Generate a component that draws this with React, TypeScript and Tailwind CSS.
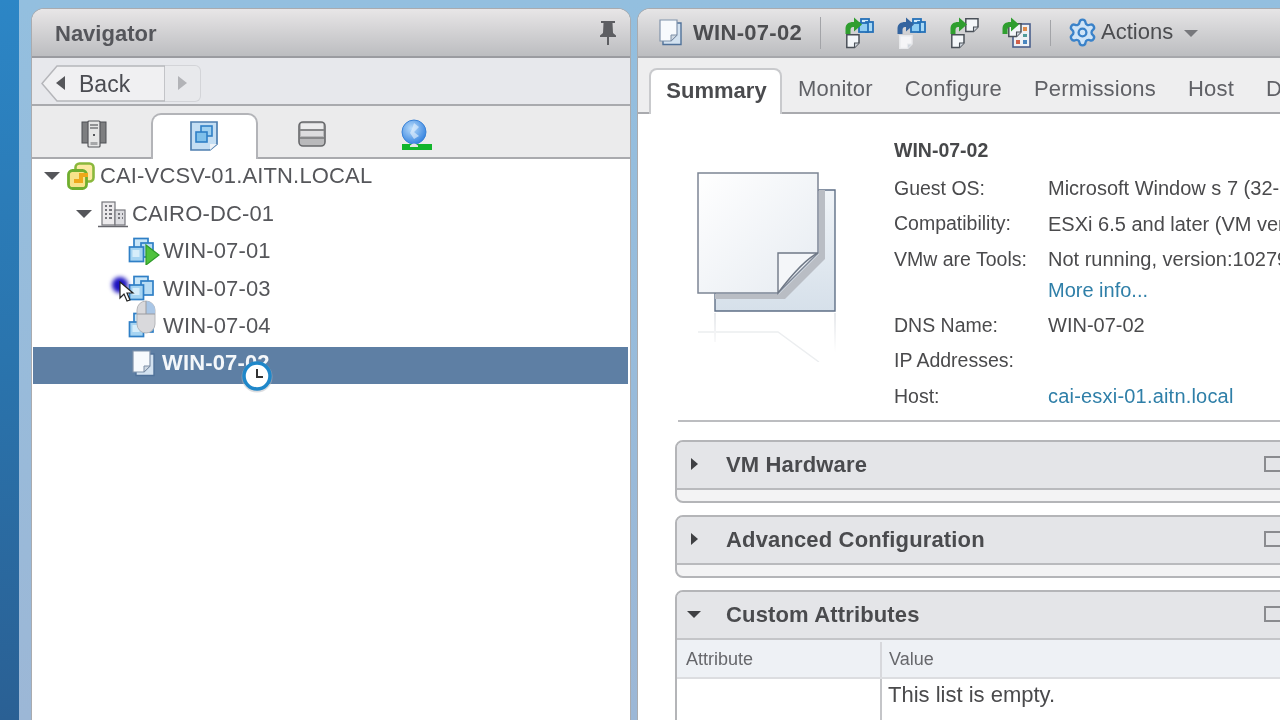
import { Settings } from "lucide-react";
import React from "react";

function VmGroupIcon({ running = false }: { running?: boolean }) {
  return (
    <svg width="32" height="28" viewBox="0 0 32 28" className="shrink-0">
      <rect x="6" y="1.5" width="14" height="13" fill="#c9e6f8" stroke="#2f7fc6" strokeWidth="1.7" />
      <rect x="13" y="6" width="12" height="14" fill="#b7dcf4" stroke="#2f7fc6" strokeWidth="1.7" />
      <rect x="1.5" y="10" width="14" height="14.5" fill="#a6d4f2" stroke="#2f7fc6" strokeWidth="1.7" />
      <rect x="4.5" y="13" width="7" height="7" fill="#d6edfa" />
      {running && <path d="M18 8 L31 18 L18 28 Z" fill="#4fc23d" stroke="#2f9a2a" strokeWidth="1.2" />}
    </svg>
  );
}

function DocIcon() {
  return (
    <svg width="24" height="27" viewBox="0 0 24 27" className="shrink-0">
      <path d="M5 4 H23 V25.5 H5 Z" fill="#d3e2f0" stroke="#4f7199" strokeWidth="1.4" />
      <path d="M2 1 H19 V16 L13 22 H2 Z" fill="#f7fafd" stroke="#8093ab" strokeWidth="1.2" />
      <path d="M13 22 V16 H19 Z" fill="#cfd8e2" stroke="#7d8fa6" strokeWidth="1" />
    </svg>
  );
}

function VcenterIcon() {
  return (
    <svg width="28" height="28" viewBox="0 0 28 28" className="shrink-0">
      <rect x="8.5" y="1.5" width="18" height="18" rx="4" fill="#fbe9a0" stroke="#8ab83c" strokeWidth="2.6" />
      <rect x="1.5" y="8.5" width="18" height="18" rx="4" fill="#f8e38a" stroke="#6fae2f" strokeWidth="2.8" />
      <path d="M7 17 h5 v-6 h9 v4 h-5 v6 h-9 Z" fill="#eea81a" />
    </svg>
  );
}

function DatacenterIcon() {
  return (
    <svg width="30" height="28" viewBox="0 0 30 28" className="shrink-0">
      <rect x="4" y="2" width="13" height="23" fill="#eceaec" stroke="#77777d" strokeWidth="1.2" />
      <rect x="17" y="10" width="10" height="15" fill="#dcdce0" stroke="#77777d" strokeWidth="1.2" />
      <path d="M7 6h2M11 6h3M7 10h2M11 10h3M7 14h2M11 14h3M7 18h2M11 18h3M20 14h2M24 14h1M20 18h2M24 18h1" stroke="#77777d" strokeWidth="2" />
      <path d="M0 26.5 H30" stroke="#66666c" strokeWidth="1.6" />
    </svg>
  );
}

function ArrowGlyph({ color = "#2f9e2f" }: { color?: string }) {
  return <path d="M0.5 17 V11.5 C0.5 7 4 5 8 5 H9 V0.5 L17 7.5 L9 14.5 V10 H8 C6.5 10 5.5 11 5.5 13 V17 Z" fill={color} />;
}

function SmallDoc({ x, y, faded = false }: { x: number; y: number; faded?: boolean }) {
  return (
    <g transform={`translate(${x} ${y})`}>
      <path
        d="M0.8 0.8 H13 V9 L8.5 13.5 H0.8 Z"
        fill={faded ? "#f5f5f7" : "#f3f6f9"}
        stroke={faded ? "#e8e9ec" : "#4a5058"}
        strokeWidth="1.5"
      />
      <path d="M8.5 13.5 V9 H13" fill="#cfd6dd" stroke={faded ? "#e8e9ec" : "#4a5058"} strokeWidth="1.1" />
    </g>
  );
}

function SmallGroup({ x, y }: { x: number; y: number }) {
  return (
    <g transform={`translate(${x} ${y})`} stroke="#2470b8" strokeWidth="1.8">
      <rect x="3" y="1" width="8" height="8" fill="#d3ecfb" />
      <rect x="8" y="4" width="7" height="10" fill="#a9d9f5" />
      <rect x="1" y="5" width="9" height="9" fill="#8fcdf2" />
    </g>
  );
}

function ToolIcon({ kind }: { kind: 1 | 2 | 3 | 4 }) {
  return (
    <svg width="30" height="32" viewBox="0 0 30 32" className="mt-[1px] shrink-0">
      {kind === 1 && (
        <>
          <SmallGroup x={13} y={1} />
          <ArrowGlyph />
          <SmallDoc x={1} y={17} />
        </>
      )}
      {kind === 2 && (
        <>
          <SmallGroup x={13} y={1} />
          <ArrowGlyph color="#34649f" />
          <SmallDoc x={2} y={18} faded />
        </>
      )}
      {kind === 3 && (
        <>
          <SmallDoc x={15} y={1} />
          <ArrowGlyph />
          <SmallDoc x={1} y={17} />
        </>
      )}
      {kind === 4 && (
        <>
          <rect x="11" y="7" width="17" height="23" fill="#eef1f5" stroke="#4a5f8c" strokeWidth="1.6" />
          <rect x="21" y="10" width="4" height="4" fill="#e08a4a" />
          <rect x="21" y="17" width="4" height="3" fill="#4f9a9a" />
          <rect x="14" y="23" width="4" height="4" fill="#d0604a" />
          <rect x="21" y="23" width="4" height="4" fill="#4a86c0" />
          <SmallDoc x={6} y={6} />
          <ArrowGlyph />
        </>
      )}
    </svg>
  );
}

function BigDoc() {
  return (
    <svg width="140" height="190" viewBox="0 0 140 190" className="shrink-0">
      <defs>
        <linearGradient id="page" x1="0" y1="0" x2="1" y2="1">
          <stop offset="0" stopColor="#ffffff" />
          <stop offset="1" stopColor="#e6ebf1" />
        </linearGradient>
        <linearGradient id="back" x1="0" y1="0" x2="0" y2="1">
          <stop offset="0" stopColor="#f0f4f8" />
          <stop offset="1" stopColor="#d6e0ea" />
        </linearGradient>
        <linearGradient id="fade" x1="0" y1="0" x2="0" y2="1">
          <stop offset="0" stopColor="#e6e8eb" />
          <stop offset="1" stopColor="#ffffff" />
        </linearGradient>
      </defs>
      <path d="M18 18 H138 V139 H18 Z" fill="url(#back)" stroke="#5f6f86" strokeWidth="1.4" />
      <path d="M122 18 H128 V87 L88 127 H18 V122 H82 L122 82 Z" fill="#b9bdc4" />
      <path d="M1 1 H121 V81 L81 121 H1 Z" fill="url(#page)" stroke="#7c8594" strokeWidth="1.5" />
      <path d="M81 121 V81 H121 Q106 88 81 121 Z" fill="#f4f6f9" stroke="#6f7886" strokeWidth="1.4" />
      <path d="M1 160 H81 L122 190" fill="none" stroke="#eceef0" strokeWidth="1.5" />
      <path d="M18 141 V170 M138 141 V180" stroke="url(#fade)" strokeWidth="2" />
    </svg>
  );
}

function ServerIcon() {
  return (
    <svg width="26" height="28" viewBox="0 0 26 28">
      <rect x="1" y="2" width="8" height="21" fill="#7d7e80" stroke="#4f5054" />
      <rect x="17" y="2" width="8" height="21" fill="#7d7e80" stroke="#4f5054" />
      <rect x="7" y="1" width="12" height="26" rx="1" fill="#e6e6e6" stroke="#55565a" strokeWidth="1.2" />
      <path d="M9 5h8M9 8h8" stroke="#77787b" strokeWidth="1.5" />
      <rect x="12" y="14" width="2" height="2" fill="#55565a" />
      <rect x="9.5" y="22" width="7" height="3" fill="#a6a7a9" />
    </svg>
  );
}

function StorageIcon() {
  return (
    <svg width="28" height="26" viewBox="0 0 28 26">
      <rect x="1" y="1" width="26" height="24" rx="4" fill="#b9b9bb" stroke="#67686b" strokeWidth="1.6" />
      <rect x="3" y="2.5" width="22" height="5.5" fill="#ececed" />
      <rect x="3" y="10" width="22" height="5" fill="#dddddf" />
      <path d="M1 9H27M1 17H27" stroke="#77787b" strokeWidth="1.6" />
    </svg>
  );
}

function NetworkIcon() {
  return (
    <svg width="32" height="32" viewBox="0 0 32 32">
      <defs>
        <radialGradient id="globe" cx="0.4" cy="0.35" r="0.7">
          <stop offset="0" stopColor="#b9dcfb" />
          <stop offset="1" stopColor="#2f7fde" />
        </radialGradient>
      </defs>
      <circle cx="13" cy="13" r="12" fill="url(#globe)" stroke="#3a82d6" />
      <path d="M13 4 L18 8 L13 13 L18 17 L13 20 L9 14 L11 10 Z" fill="#eaf4fd" opacity="0.6" />
      <rect x="1" y="25" width="30" height="6" fill="#12b52b" />
      <path d="M9 26.5 Q13 22.5 17 26.5 V28 H9 Z" fill="#e6e6e6" />
    </svg>
  );
}

function PinIcon() {
  return (
    <svg width="18" height="26" viewBox="0 0 18 26">
      <path d="M2 1 H16 V3 H13.5 L14 13 L17 15.5 V17 H10 V25 H8 V17 H1 V15.5 L4 13 L4.5 3 H2 Z" fill="#5d5e62" />
    </svg>
  );
}

function TreeRow({
  indent,
  open,
  icon,
  label,
  selected = false,
}: {
  indent: string;
  open?: boolean;
  icon: React.ReactNode;
  label: string;
  selected?: boolean;
}) {
  return (
    <div className={`h-[37.5px] shrink-0 ${selected ? "mr-[2px] ml-[1px] bg-[#5e7fa4] pb-[4px]" : "pb-[3px]"}`}>
      <div className={`flex h-full items-center ${indent}`}>
        {open && (
          <div className="mr-[7px] h-0 w-0 shrink-0 border-x-[8px] border-t-[8px] border-x-transparent border-t-[#55565a]" />
        )}
        {icon}
        <span
          className={`whitespace-nowrap text-[22px] leading-none tracking-[0.15px] ${
            selected ? "font-bold text-[#f4f7fa]" : "text-[#55565a]"
          }`}
        >
          {label}
        </span>
      </div>
    </div>
  );
}

function InfoRow({ label, value, link = false }: { label: string; value?: string; link?: boolean }) {
  return (
    <div className="flex h-[35.5px] items-center whitespace-nowrap text-[#4a4a4c]">
      <span className="w-[154px] shrink-0 text-[19.5px]">{label}</span>
      {value && <span className={link ? "text-[20px] tracking-[0.2px] text-[#2f7fa8]" : "text-[20px]"}>{value}</span>}
    </div>
  );
}

function Section({ title, open = false }: { title: string; open?: boolean }) {
  return (
    <div className="mr-[-12px] mb-[12px] ml-[37px] shrink-0 overflow-hidden rounded-[8px] border-2 border-[#b4b5b8] bg-[#f3f3f4]">
      <div className="flex h-[46px] items-center bg-[#e4e5e8] pb-[2px]">
        <div className="flex w-[49px] shrink-0 justify-center pr-[15px]">
          {open ? (
            <div className="h-0 w-0 border-x-[7px] border-t-[7px] border-x-transparent border-t-[#3f4043]" />
          ) : (
            <div className="h-0 w-0 border-y-[6px] border-l-[7px] border-y-transparent border-l-[#3f4043]" />
          )}
        </div>
        <span className="whitespace-nowrap text-[22px] font-bold tracking-[0.15px] text-[#4a4b4e]">{title}</span>
        <div className="mr-[-1px] ml-auto h-[16px] w-[27px] shrink-0 border-2 border-[#8a8b8f]" />
      </div>
      {open ? (
        <div className="border-t-2 border-[#c4c5c8] bg-white">
          <div className="flex h-[39px] border-b-2 border-[#dcdde0] bg-[#eef1f5] pt-[2px] text-[18px] text-[#66676b]">
            <div className="flex w-[205px] shrink-0 items-center border-r-2 border-[#d7d8dc] pl-[9px]">Attribute</div>
            <div className="flex items-center pl-[7px]">Value</div>
          </div>
          <div className="flex h-[60px]">
            <div className="w-[205px] shrink-0 border-r-2 border-[#c4c5c8]" />
            <div className="pl-[6px] text-[22px] leading-[31px] text-[#4a4a4c]">This list is empty.</div>
          </div>
        </div>
      ) : (
        <div className="h-[13px] border-t-2 border-[#b9babd]" />
      )}
    </div>
  );
}

export default function App() {
  return (
    <div className="relative flex h-[720px] w-[1280px] overflow-hidden bg-[#9dbfdc] font-['Liberation_Sans',sans-serif] blur-[0.4px]">
      {/* desktop strip on the far left */}
      <div className="h-full w-[19px] shrink-0 bg-gradient-to-b from-[#2c86c6] via-[#2a74ad] to-[#2a6094]" />

      <div className="flex min-w-0 flex-1 gap-[8px] bg-gradient-to-b from-[#93bfdf] to-[#9cb7d6] pt-[9px] pl-[13px]">
        {/* Navigator */}
        <div className="flex h-[720px] w-[598px] shrink-0 flex-col overflow-hidden rounded-t-[12px] bg-white shadow-[0_0_0_1px_#a9abaf]">
          <div className="flex h-[49px] shrink-0 items-center justify-between border-b-2 border-[#9a9ba0] bg-gradient-to-b from-[#e8e6e7] to-[#bcbdc0] pr-[13px] pl-[23px]">
            <span className="pt-[1px] text-[22px] font-bold text-[#55565b]">Navigator</span>
            <PinIcon />
          </div>

          <div className="flex h-[48px] shrink-0 items-center border-b-2 border-[#a9aaae] bg-[#e7e8ec] pt-[4px] pl-[9px]">
            <div className="relative flex h-[37px] w-[124px] items-center">
              <svg width="124" height="37" viewBox="0 0 124 37" className="absolute inset-0">
                <path d="M16 1 H124 V36 H16 L1 18.5 Z" fill="#f0f0f2" stroke="#b5b6ba" strokeWidth="1.5" />
              </svg>
              <div className="relative ml-[15px] h-0 w-0 border-y-[7px] border-r-[9px] border-y-transparent border-r-[#55565a]" />
              <span className="relative mt-[2px] ml-[14px] text-[23px] text-[#4b4c52]">Back</span>
            </div>
            <div className="flex h-[37px] w-[36px] items-center justify-center rounded-r-[6px] border border-l-0 border-[#d3d4d8] bg-[#e8e9ec]">
              <div className="h-0 w-0 border-y-[7px] border-l-[9px] border-y-transparent border-l-[#b2b3b7]" />
            </div>
          </div>

          <div className="flex h-[53px] shrink-0 items-end border-b-2 border-[#a9aaae] bg-[#ebebec] pl-[8px]">
            <div className="mb-[3px] flex h-[40px] w-[107px] shrink-0 items-center justify-center">
              <ServerIcon />
            </div>
            <div className="mb-[-2px] ml-[4px] flex h-[46px] w-[107px] shrink-0 items-center justify-center rounded-t-[10px] border-2 border-b-0 border-[#b3b4b8] bg-white pb-[2px] pr-[2px]">
              <svg width="30" height="32" viewBox="0 0 30 32">
                <path d="M2 2 H28 V24 L21 30 H2 Z" fill="#c4def3" stroke="#4f7fb0" strokeWidth="1.7" />
                <path d="M21 30 V24 H28 Z" fill="#eef3f8" />
                <rect x="12" y="6" width="11" height="10" fill="#9fd0f0" stroke="#2f7fc6" strokeWidth="1.6" />
                <rect x="7" y="12" width="11" height="10" fill="#7fc0ea" stroke="#2f7fc6" strokeWidth="1.6" />
              </svg>
            </div>
            <div className="mb-[3px] flex h-[40px] w-[107px] shrink-0 items-center justify-center">
              <StorageIcon />
            </div>
            <div className="mb-[2px] flex h-[40px] w-[103px] shrink-0 items-center justify-center">
              <NetworkIcon />
            </div>
          </div>

          <div className="flex flex-1 flex-col">
            <TreeRow indent="pl-[12px]" open icon={<div className="mr-[5px]"><VcenterIcon /></div>} label="CAI-VCSV-01.AITN.LOCAL" />
            <TreeRow indent="pl-[44px]" open icon={<div className="mr-[4px] ml-[-1px]"><DatacenterIcon /></div>} label="CAIRO-DC-01" />
            <TreeRow indent="pl-[96px]" icon={<div className="mr-[3px]"><VmGroupIcon running /></div>} label="WIN-07-01" />
            <TreeRow indent="pl-[96px]" icon={<div className="mr-[3px]"><VmGroupIcon /></div>} label="WIN-07-03" />
            <TreeRow indent="pl-[96px]" icon={<div className="mr-[3px]"><VmGroupIcon /></div>} label="WIN-07-04" />
            <TreeRow selected indent="pl-[98px]" icon={<div className="mr-[7px]"><DocIcon /></div>} label="WIN-07-02" />
          </div>
        </div>

        {/* Object workspace */}
        <div className="flex h-[720px] min-w-0 flex-1 flex-col overflow-hidden rounded-tl-[12px] bg-white shadow-[0_0_0_1px_#a9abaf]">
          <div className="flex h-[49px] shrink-0 items-center border-b-2 border-[#a6a7ab] bg-gradient-to-b from-[#e6e5e6] to-[#bcbdc0] pl-[20px]">
            <DocIcon />
            <span className="ml-[11px] text-[22px] font-bold tracking-[0.3px] text-[#4c4d50]">WIN-07-02</span>
            <div className="mr-[24px] ml-[18px] h-[32px] w-[1px] bg-[#a3a4a8]" />
            <ToolIcon kind={1} />
            <div className="ml-[22px]"><ToolIcon kind={2} /></div>
            <div className="ml-[23px]"><ToolIcon kind={3} /></div>
            <div className="ml-[22px]"><ToolIcon kind={4} /></div>
            <div className="mr-[16px] ml-[18px] h-[26px] w-[1px] bg-[#a3a4a8]" />
            <Settings size={31} strokeWidth={1.8} className="fill-[#cfe4f7] text-[#3a82c9]" />
            <span className="mb-[3px] ml-[3px] text-[22px] text-[#4c4d50]">Actions</span>
            <div className="mt-[2px] ml-[11px] h-0 w-0 border-x-[7px] border-t-[7px] border-x-transparent border-t-[#77787c]" />
          </div>

          <div className="flex h-[56px] shrink-0 items-end border-b-2 border-[#a9aaae] bg-[#eeeeef] pl-[11px]">
            <div className="mb-[-2px] flex h-[46px] w-[133px] shrink-0 items-center justify-center rounded-t-[8px] border-2 border-b-0 border-[#c9cacd] bg-white pb-[4px] pl-[2px] text-[22px] font-bold text-[#4a4b4e]">
              Summary
            </div>
            <div className="flex h-[47px] items-center gap-[32px] pl-[16px] text-[22px] tracking-[0.2px] whitespace-nowrap text-[#606166]">
              <span>Monitor</span>
              <span>Configure</span>
              <span>Permissions</span>
              <span>Host</span>
              <span>Datastores</span>
            </div>
          </div>

          <div className="flex shrink-0 pt-[19px] pl-[59px]">
            <div className="mt-[39px]"><BigDoc /></div>
            <div className="ml-[57px] min-w-0 flex-1 overflow-hidden">
              <div className="mb-[1.5px] flex h-[36px] items-center text-[19.5px] font-bold text-[#47484a]">WIN-07-02</div>
              <InfoRow label="Guest OS:" value="Microsoft Window s 7 (32-bit)" />
              <InfoRow label="Compatibility:" value="ESXi 6.5 and later (VM version 13)" />
              <InfoRow label="VMw are Tools:" value="Not running, version:10279 (Guest Managed)" />
              <div className="mb-[5.5px] flex h-[25px] items-center pl-[154px] text-[20px] text-[#2f7fa8]">More info...</div>
              <InfoRow label="DNS Name:" value="WIN-07-02" />
              <InfoRow label="IP Addresses:" />
              <InfoRow label="Host:" value="cai-esxi-01.aitn.local" link />
            </div>
          </div>

          <div className="mt-[6px] mb-[18px] ml-[40px] h-[2px] shrink-0 bg-[#bcbdc0]" />

          <Section title="VM Hardware" />
          <Section title="Advanced Configuration" />
          <Section title="Custom Attributes" open />
        </div>
      </div>

      {/* screen recording overlays: click marker, pointer, mouse hint, busy clock */}
      <div className="absolute top-[277px] left-[112px] h-[16px] w-[16px] rounded-full bg-[#1c12c0] blur-[2px]" />
      <svg width="16" height="22" viewBox="0 0 16 22" className="absolute top-[281px] left-[119px]">
        <path d="M1 1 V17 L5 13 L8 20 L11 19 L8 12 L14 12 Z" fill="#ffffff" stroke="#222222" strokeWidth="1.2" />
      </svg>
      <svg width="20" height="34" viewBox="0 0 20 34" className="absolute top-[300px] left-[136px]">
        <rect x="1" y="1" width="18" height="32" rx="9" fill="#d9d9dc" stroke="#b5b6ba" />
        <path d="M10 1 A9 9 0 0 1 19 10 V14 H10 Z" fill="#a9c6e6" />
        <path d="M1 14 H19 M10 1 V14" stroke="#9a9ba0" />
      </svg>
      <svg width="34" height="34" viewBox="0 0 34 34" className="absolute top-[359px] left-[240px]">
        <circle cx="17" cy="18" r="15.5" fill="#b9bcc2" opacity="0.5" />
        <circle cx="17" cy="17" r="13" fill="#ffffff" stroke="#1f87c9" strokeWidth="3.5" />
        <path d="M17 10 V18 H23" fill="none" stroke="#333333" strokeWidth="2" />
      </svg>
    </div>
  );
}
